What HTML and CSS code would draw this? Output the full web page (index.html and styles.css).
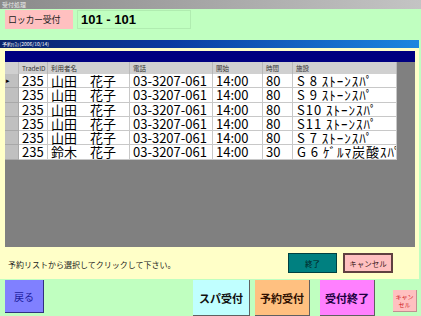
FILE: index.html
```html
<!DOCTYPE html>
<html lang="ja">
<head>
<meta charset="utf-8">
<link rel="stylesheet" href="styles.css">
</head>
<body>
<div class="app">
  <div class="app-title">受付処理</div>
  <div class="top">
    <div class="label">ロッカー受付</div>
    <div class="value">101 - 101</div>
  </div>
  <div class="dialog">
    <div class="dlg-title">予約ﾘｽﾄ(2006/10/14)</div>
    <div class="dlg-body">
      <div class="grid">
        <div class="caption"></div>
        <div class="table">
          <div class="row head"><span class="sel"></span><span>TradeID</span><span>利用者名</span><span>電話</span><span>開始</span><span>時間</span><span>施設</span></div>
          <div class="row"><span class="sel cur">&#9656;</span><span>235</span><span>山田　花子</span><span>03-3207-061</span><span>14:00</span><span>80</span><span class="fac">S 8 ｽﾄｰﾝｽﾊﾟ</span></div>
          <div class="row"><span class="sel"></span><span>235</span><span>山田　花子</span><span>03-3207-061</span><span>14:00</span><span>80</span><span class="fac">S 9 ｽﾄｰﾝｽﾊﾟ</span></div>
          <div class="row"><span class="sel"></span><span>235</span><span>山田　花子</span><span>03-3207-061</span><span>14:00</span><span>80</span><span class="fac">S10 ｽﾄｰﾝｽﾊﾟ</span></div>
          <div class="row"><span class="sel"></span><span>235</span><span>山田　花子</span><span>03-3207-061</span><span>14:00</span><span>80</span><span class="fac">S11 ｽﾄｰﾝｽﾊﾟ</span></div>
          <div class="row"><span class="sel"></span><span>235</span><span>山田　花子</span><span>03-3207-061</span><span>14:00</span><span>80</span><span class="fac">S 7 ｽﾄｰﾝｽﾊﾟ</span></div>
          <div class="row"><span class="sel"></span><span>235</span><span>鈴木　花子</span><span>03-3207-061</span><span>14:00</span><span>30</span><span class="fac">G 6 ｹﾞﾙﾏ炭酸ｽﾊﾟ</span></div>
        </div>
      </div>
      <div class="footer">
        <p class="msg">予約リストから選択してクリックして下さい。</p>
        <button class="btn btn-end">終了</button>
        <button class="btn btn-cancel">キャンセル</button>
      </div>
    </div>
  </div>
  <div class="bottom">
    <button class="bb b-back">戻る</button>
    <button class="bb b-spa">スパ受付</button>
    <button class="bb b-res">予約受付</button>
    <button class="bb b-end">受付終了</button>
    <button class="bb b-cancel">キャン<br>セル</button>
  </div>
</div>
</body>
</html>
```

FILE: styles.css
```css
* { box-sizing: border-box; }
html, body { margin: 0; padding: 0; }
body {
  width: 421px;
  height: 316px;
  overflow: hidden;
  background: #c0ffc0;
  font-family: "Noto Sans CJK JP", "Noto Sans", sans-serif;
  color: #000;
}
.app { width: 421px; height: 316px; display: flex; flex-direction: column; }

.app-title {
  height: 9px;
  background: linear-gradient(to right, #8a8a8a, #c4c4c4);
  color: #e8e8e8;
  font-size: 6px;
  line-height: 9px;
  padding-left: 2px;
}

.top {
  height: 31px;
  display: flex;
  align-items: flex-start;
  padding: 1px 0 0 5px;
  gap: 4px;
}
.label {
  width: 68px;
  height: 19px;
  background: #ffc0c0;
  font-size: 9px;
  line-height: 19px;
  padding-left: 3px;
  color: #222;
  letter-spacing: -0.3px;
}
.value {
  width: 114px;
  height: 19px;
  border: 1px solid #b0ecb0;
  font-size: 13px;
  font-weight: bold;
  line-height: 17px;
  padding-left: 3px;
  font-family: "Liberation Sans", "Noto Sans CJK JP", sans-serif;
}

.dialog {
  width: 419px;
  height: 239px;
  display: flex;
  flex-direction: column;
  background: #ffffc8;
}
.dlg-title {
  height: 8px;
  background: linear-gradient(to right, #0a246a 0%, #0a3aa0 40%, #1c86e0 100%);
  color: #fff;
  font-size: 5px;
  line-height: 8px;
  padding-left: 2px;
  white-space: nowrap;
}
.dlg-body { flex: 1; display: flex; flex-direction: column; padding-top: 3px; }

.grid {
  margin-left: 5px;
  width: 410px;
  height: 196px;
  background: #808080;
  display: flex;
  flex-direction: column;
}
.caption { height: 11px; background: #000080; }
.table { display: flex; flex-direction: column; }
.row {
  display: grid;
  grid-template-columns: 14px 29px 82px 83px 50px 30px 104px;
  height: 14.3px;
  font-size: 13px;
  line-height: 13px;
}
.row span {
  background: #fff;
  border-right: 1px solid #c8c8c8;
  border-bottom: 1px solid #c8c8c8;
  padding-left: 3px;
  white-space: nowrap;
}
.row span.fac { overflow: hidden; padding-left: 4px; letter-spacing: 1px; }
.row span.sel { background: #c0c0c0; border-color: #a8a8a8; padding-left: 1px; font-size: 7px; }
.row.head { height: 12px; font-size: 6.5px; line-height: 12px; color: #333; }
.row.head span { background: #d0d0d0; border-color: #b8b8b8; }

.footer {
  flex: 1;
  display: flex;
  align-items: flex-start;
  padding: 6px 26px 0 8px;
}
.msg {
  margin: 0;
  flex: 1;
  font-size: 8px;
  line-height: 20px;
  padding-top: 2px;
  color: #222;
}
.btn {
  height: 20px;
  font-family: inherit;
  font-size: 7.5px;
  padding: 0;
  cursor: pointer;
}
.btn-end {
  width: 49px;
  background: #008080;
  border: 1px solid #004040;
  color: #002020;
}
.btn-cancel {
  width: 50px;
  margin-left: 6px;
  background: #ffc0c0;
  border: 2px solid #604040;
  color: #402020;
}

.bottom {
  flex: 1;
  display: flex;
  align-items: flex-start;
  padding: 1px 0 0 5px;
}
.bb {
  font-family: inherit;
  font-weight: bold;
  padding: 0;
  border: none;
  border-right: 1px solid #606060;
  border-bottom: 1px solid #606060;
  cursor: pointer;
}
.b-back {
  width: 39px;
  height: 33px;
  background: #8080ff;
  color: #2020a0;
  font-size: 10px;
  font-weight: normal;
  border-color: #303080;
}
.b-spa { width: 57px; height: 36px; margin-left: 149px; background: #c0ffff; font-size: 11px; color: #101010; }
.b-res { width: 55px; height: 36px; margin-left: 5px; background: #ffc080; font-size: 11px; color: #301000; }
.b-end { width: 55px; height: 36px; margin-left: 10px; background: #ff80ff; font-size: 11px; color: #200040; }
.b-cancel {
  width: 24px;
  height: 22px;
  margin-left: 18px;
  margin-top: 10px;
  background: #ffc0c0;
  color: #d02020;
  font-size: 6px;
  font-weight: normal;
  line-height: 8px;
  border-color: #c09090;
}
```
